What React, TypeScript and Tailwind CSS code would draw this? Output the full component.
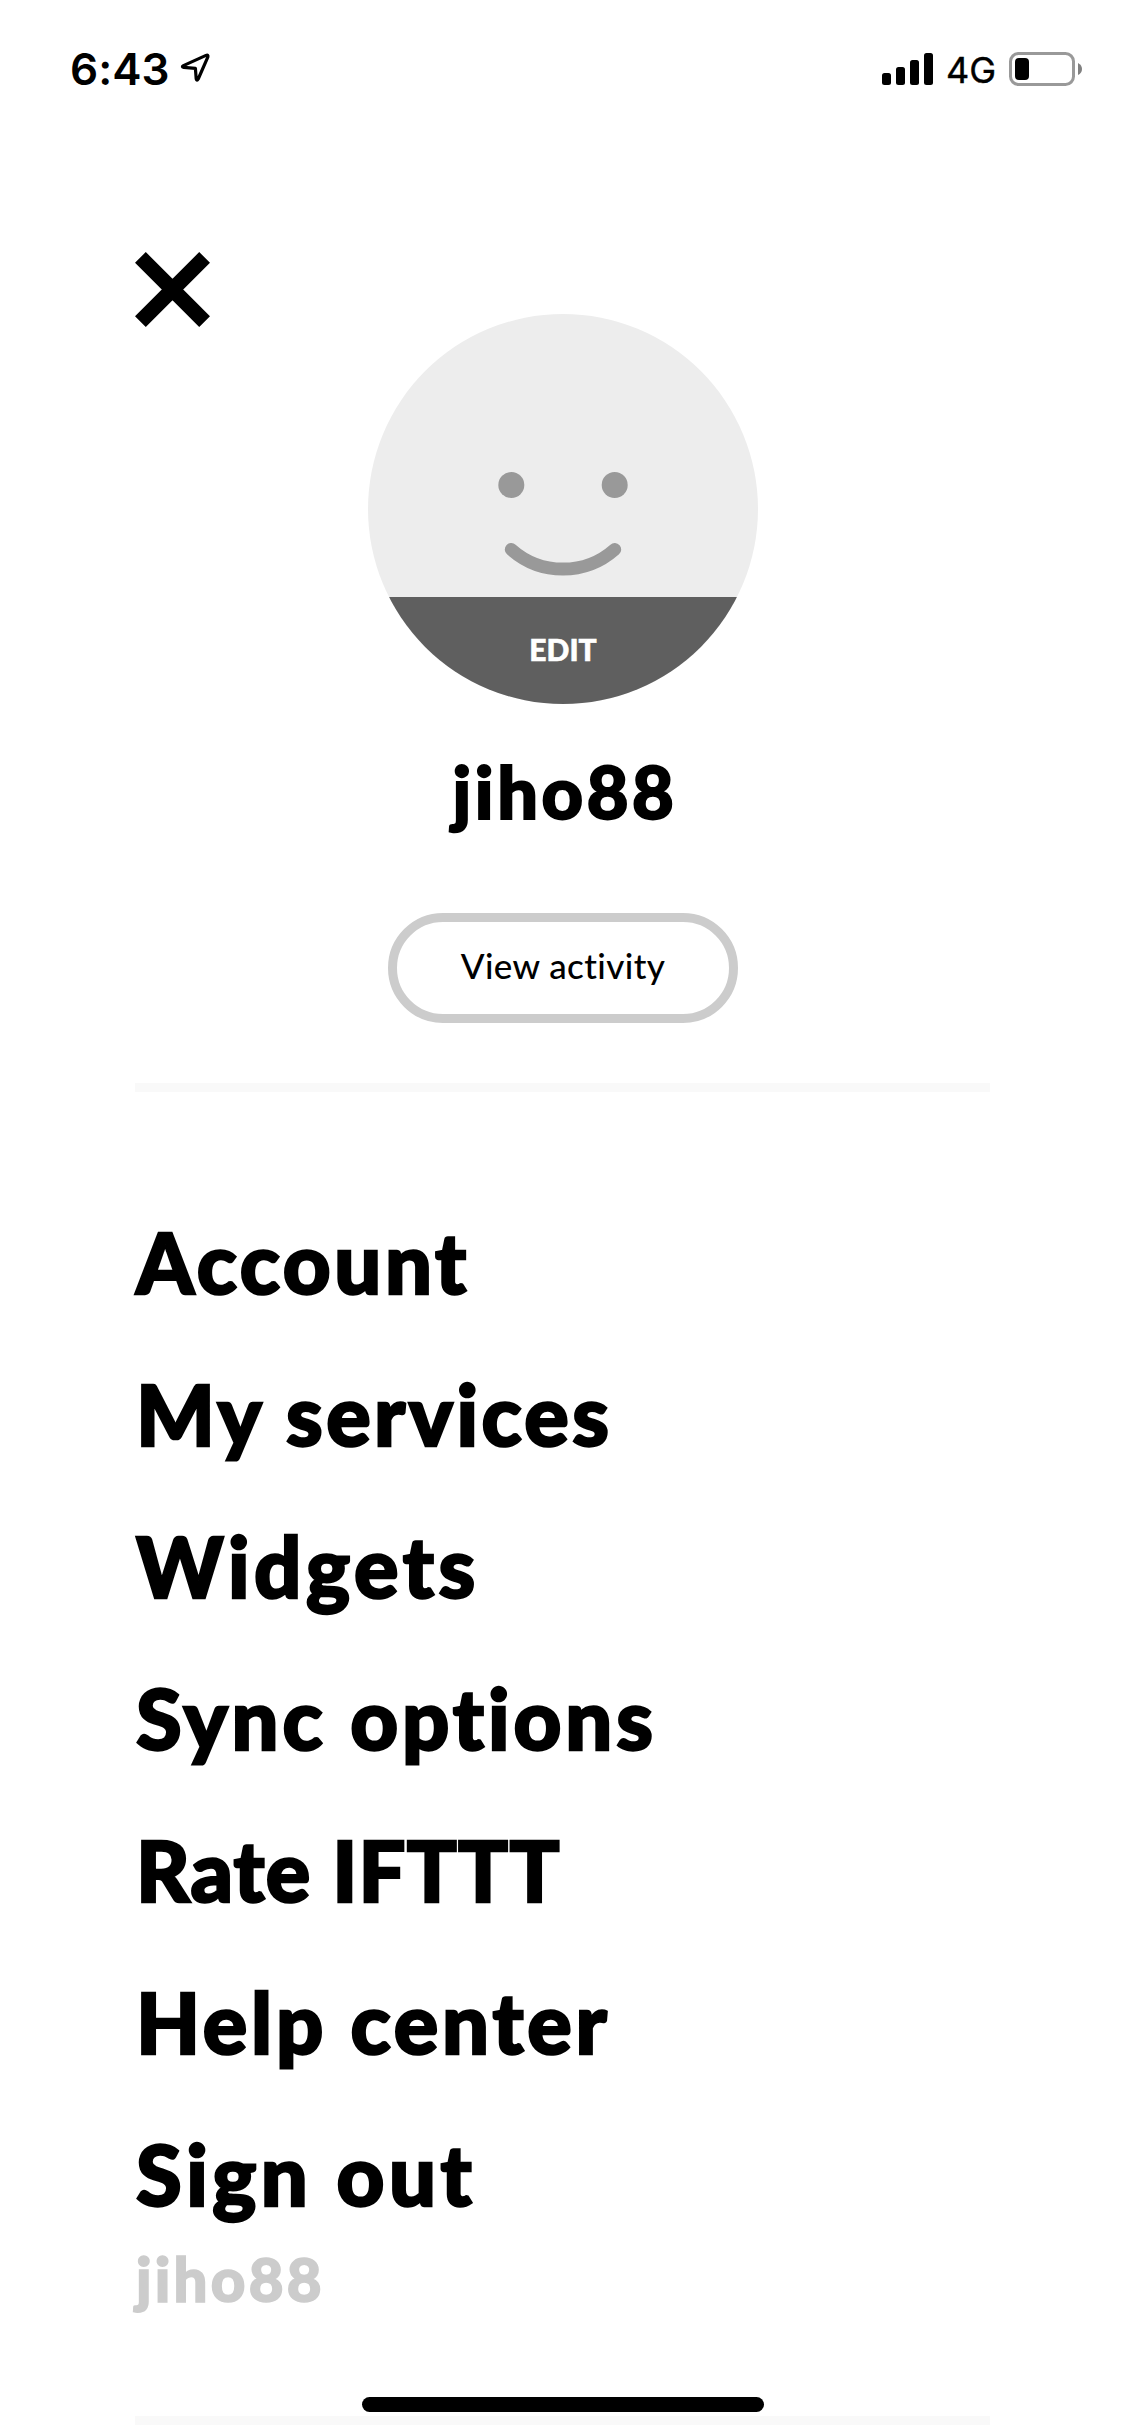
const menuItems = [
  { label: 'Account', spacing: 'tracking-[3.6px]' },
  { label: 'My services', spacing: 'tracking-[3.4px]' },
  { label: 'Widgets', spacing: 'tracking-[4.6px]' },
  { label: 'Sync options', spacing: 'tracking-[3.9px]' },
  { label: 'Rate IFTTT', spacing: 'tracking-[1.2px]' },
  { label: 'Help center', spacing: 'tracking-[3.8px]' },
  { label: 'Sign out', spacing: 'tracking-[4.5px]' },
];

function StatusBar() {
  return (
    <header className="flex h-[138px] justify-between pl-[70px] pr-[43px] pt-[52px] font-['Inter',sans-serif]">
      <div className="flex h-9 items-start">
        <span className="w-[110px] whitespace-nowrap text-[44px] font-semibold leading-[35px]">6:43</span>
        <svg className="h-9 w-8" viewBox="0 0 32 36" fill="none">
          <path d="M3.4 14.6 L26 4.4 Q28.6 3.4 27.8 6.2 L18.2 28 Q16.8 30.4 16.2 27.8 L15.4 17.4 L3.8 16.4 Q1.2 15.8 3.4 14.6 Z" transform="translate(0 -1)" stroke="black" strokeWidth="3.2" strokeLinejoin="round" />
        </svg>
      </div>
      <div className="flex h-9 items-start">
        <svg className="h-9 w-[52px]" viewBox="0 0 52 36">
          <rect x="0" y="21" width="9" height="12" rx="2.5" />
          <rect x="14" y="15" width="9" height="18" rx="2.5" />
          <rect x="28" y="8" width="9" height="25" rx="2.5" />
          <rect x="42" y="1" width="9" height="32" rx="2.5" />
        </svg>
        <span className="ml-3 w-[63px] whitespace-nowrap text-[36px] leading-[36px] [-webkit-text-stroke:0.4px]">4G</span>
        <svg className="h-9 w-[73px]" viewBox="0 0 73 36">
          <rect x="1.5" y="1.5" width="63" height="31" rx="8" fill="none" stroke="#999999" strokeWidth="3" />
          <rect x="6" y="6" width="14" height="22" rx="4" />
          <path d="M69 11 Q73 13 73 17 Q73 21 69 23 Z" fill="#808080" />
        </svg>
      </div>
    </header>
  );
}

function Avatar() {
  return (
    <div className="flex h-[390px] w-[390px] flex-col overflow-hidden rounded-full bg-[#ededed]">
      <svg className="h-[283px] w-[390px]" viewBox="0 0 390 283" fill="none">
        <circle cx="143.3" cy="171" r="13" fill="#999999" />
        <circle cx="246.7" cy="171" r="13" fill="#999999" />
        <path d="M143.3 235.5 A78 78 0 0 0 246.7 235.5" stroke="#999999" strokeWidth="13" strokeLinecap="round" />
      </svg>
      <button className="flex h-[107px] w-full justify-center bg-[#5f5f5f] pt-[34px] text-[30px] font-black leading-[36px] text-white [-webkit-text-stroke:0.6px]">
        EDIT
      </button>
    </div>
  );
}

export default function App() {
  return (
    <div className="relative h-[2436px] w-[1125px] overflow-hidden bg-white font-['Lato',sans-serif] text-black [font-variant-ligatures:none]">
      <StatusBar />

      <main className="flex flex-col px-[135px]">
        {/* Profile */}
        <section className="flex h-[945px] items-start">
          <button className="mt-[114px] w-[233px]" aria-label="Close">
            <svg className="h-[75px] w-[75px]" viewBox="0 0 75 75">
              <path d="M5.4 5.4 L69.6 69.6 M69.6 5.4 L5.4 69.6" stroke="black" strokeWidth="15.2" />
            </svg>
          </button>
          <div className="flex w-[390px] flex-col items-center pt-[176px]">
            <Avatar />
            <h1 className="mt-[43px] whitespace-nowrap pl-[4px] text-[72px] font-black leading-[88px] tracking-[3.6px] [-webkit-text-stroke:2px]">jiho88</h1>
            <button className="mt-[78px] h-[110px] w-[350px] whitespace-nowrap rounded-full border-[9px] border-[#cccccc] pb-[5px] text-[35px] font-medium leading-[87px] tracking-[0.4px]">
              View activity
            </button>
          </div>
        </section>

        <hr className="h-[9px] border-0 bg-[#f9f9f9]" />

        {/* Menu */}
        <nav className="mt-[94px] flex flex-col pl-px">
          {menuItems.map((item) => (
            <a key={item.label} className={`h-[152px] whitespace-nowrap text-[83px] font-black leading-[152px] [-webkit-text-stroke:2.4px] ${item.spacing}`}>
              {item.label}
            </a>
          ))}
        </nav>
        <p className="-mt-[7px] h-[72px] whitespace-nowrap pl-px text-[60px] font-black leading-[72px] tracking-[3.2px] text-[#cccccc] [-webkit-text-stroke:1.6px]">jiho88</p>
        <hr className="mt-[101px] h-[9px] border-0 bg-[#f9f9f9]" />
      </main>

      {/* Home indicator */}
      <div className="absolute left-[362px] top-[2397px] h-[15px] w-[402px] rounded-full bg-black" />
    </div>
  );
}
